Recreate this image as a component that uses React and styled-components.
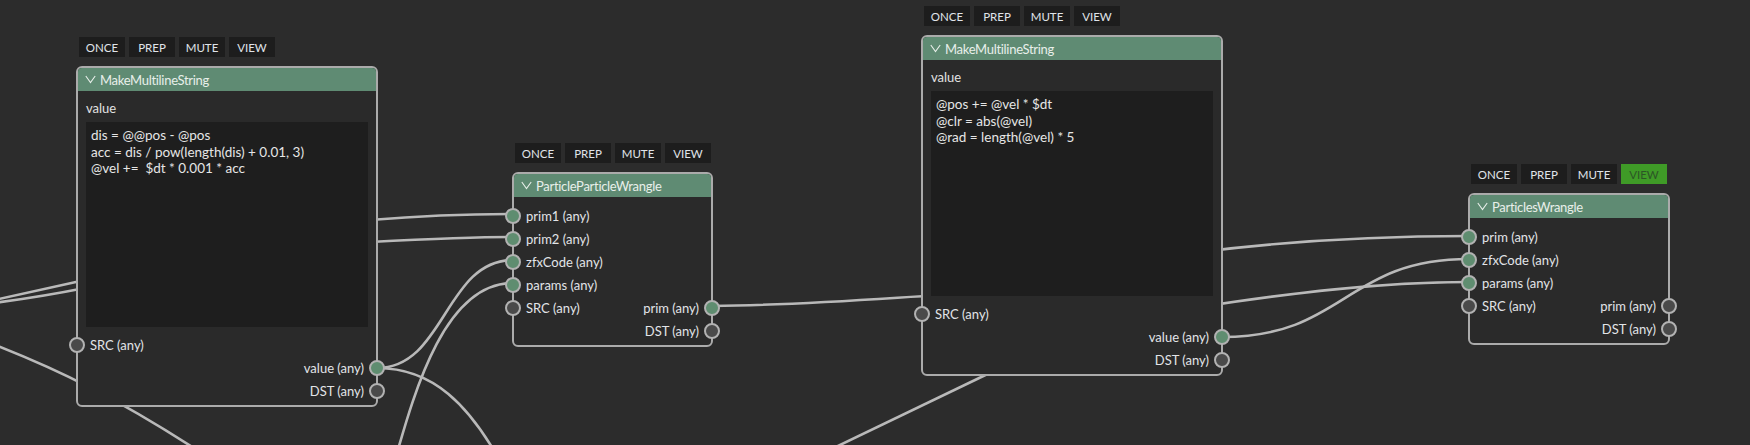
import React from 'react';
import styled, { createGlobalStyle } from 'styled-components';

const GlobalStyle = createGlobalStyle`
  html, body { margin: 0; padding: 0; background: #2c2c2c; }
  body { font-family: Lato, "Noto Sans", "Liberation Sans", sans-serif; }
`;

const Canvas = styled.div`
  position: relative;
  width: 1750px;
  height: 445px;
  overflow: hidden;
  background: #2c2c2c;
`;

const Wires = styled.svg`
  position: absolute;
  left: 0;
  top: 0;
  width: 1750px;
  height: 445px;
  pointer-events: none;
`;

const NodeFrame = styled.div`
  position: absolute;
  left: ${(p) => p.$x}px;
  top: ${(p) => p.$y}px;
  display: flex;
  flex-direction: column;
  gap: 9px;
`;

const Toolbar = styled.div`
  display: flex;
  gap: 4px;
  padding-left: 3px;
`;

const ToolButton = styled.div`
  width: 46px;
  height: 20px;
  display: flex;
  align-items: center;
  justify-content: center;
  background: ${(p) => (p.$active ? '#3f9b27' : '#1d1d1d')};
  color: ${(p) => (p.$active ? '#2c5626' : '#e0e4ea')};
  font-size: 11.5px;
`;

const NodeBox = styled.div`
  width: ${(p) => p.$w}px;
  box-sizing: border-box;
  border: 2px solid #ababab;
  border-radius: 6px;
  background: #2a2a2a;
  display: flex;
  flex-direction: column;
`;

const Header = styled.div`
  height: 23px;
  background: #5f8b73;
  border-radius: 4px 4px 0 0;
  display: flex;
  align-items: center;
  gap: 4px;
  padding-left: 7px;
  color: #e8efea;
  font-size: 13px;
  letter-spacing: -0.3px;
`;

const Body = styled.div`
  padding: 9px 8px 0 8px;
  display: flex;
  flex-direction: column;
`;

const ParamLabel = styled.div`
  height: 16px;
  line-height: 16px;
  font-size: 13px;
  color: #e2e2e2;
  margin-bottom: 6px;
`;

const CodeArea = styled.div`
  height: 205px;
  box-sizing: border-box;
  background: #1e1e1e;
  padding: 5px 5px;
  font-size: 13.5px;
  line-height: 16.5px;
  color: #e6e6e6;
  white-space: pre;
`;

const SocketList = styled.div`
  padding: ${(p) => p.$top}px 0 3px 0;
  display: flex;
  flex-direction: column;
`;

const SocketRow = styled.div`
  position: relative;
  height: 23px;
  display: flex;
  align-items: center;
  justify-content: space-between;
  padding: 0 12px;
  font-size: 13px;
  color: #e2e4e8;
`;

const SocketLabel = styled.span`
  margin-left: ${(p) => (p.$right ? 'auto' : '0')};
`;

const SocketDot = styled.span`
  position: absolute;
  top: 50%;
  margin-top: -8px;
  ${(p) => (p.$right ? 'right: -9px;' : 'left: -9px;')}
  width: 16px;
  height: 16px;
  box-sizing: border-box;
  border: 2px solid #b2b2b2;
  border-radius: 50%;
  background: ${(p) => (p.$on ? '#5f8d70' : '#4a4a4a')};
`;

const Chevron = () => (
  <svg width="11" height="9" viewBox="0 0 11 9">
    <polyline points="0.8,1 5.5,7.6 10.2,1" fill="none" stroke="#e8efea" strokeWidth="1.1" />
  </svg>
);

const Row = ({ left, right }) => (
  <SocketRow>
    {left && <SocketDot $on={left.on} />}
    {left && <SocketLabel>{left.text}</SocketLabel>}
    {right && <SocketLabel $right>{right.text}</SocketLabel>}
    {right && <SocketDot $right $on={right.on} />}
  </SocketRow>
);

const Node = ({ x, y, w, title, view, param, code, rows, rowsTop }) => (
  <NodeFrame $x={x} $y={y}>
    <Toolbar>
      <ToolButton>ONCE</ToolButton>
      <ToolButton>PREP</ToolButton>
      <ToolButton>MUTE</ToolButton>
      <ToolButton $active={view}>VIEW</ToolButton>
    </Toolbar>
    <NodeBox $w={w}>
      <Header>
        <Chevron />
        <span>{title}</span>
      </Header>
      {param && (
        <Body>
          <ParamLabel>{param}</ParamLabel>
          <CodeArea>{code}</CodeArea>
        </Body>
      )}
      <SocketList $top={rowsTop}>
        {rows.map((r, i) => (
          <Row key={i} left={r[0]} right={r[1]} />
        ))}
      </SocketList>
    </NodeBox>
  </NodeFrame>
);

const stringRows = [
  [{ text: 'SRC (any)', on: false }, null],
  [null, { text: 'value (any)', on: true }],
  [null, { text: 'DST (any)', on: false }],
];

const nodes = [
  {
    x: 76,
    y: 37,
    w: 302,
    title: 'MakeMultilineString',
    param: 'value',
    code: 'dis = @@pos - @pos\nacc = dis / pow(length(dis) + 0.01, 3)\n@vel +=  $dt * 0.001 * acc',
    rows: stringRows,
    rowsTop: 6,
  },
  {
    x: 512,
    y: 143,
    w: 201,
    title: 'ParticleParticleWrangle',
    rows: [
      [{ text: 'prim1 (any)', on: true }, null],
      [{ text: 'prim2 (any)', on: true }, null],
      [{ text: 'zfxCode (any)', on: true }, null],
      [{ text: 'params (any)', on: true }, null],
      [{ text: 'SRC (any)', on: false }, { text: 'prim (any)', on: true }],
      [null, { text: 'DST (any)', on: false }],
    ],
    rowsTop: 7,
  },
  {
    x: 921,
    y: 6,
    w: 302,
    title: 'MakeMultilineString',
    param: 'value',
    code: '@pos += @vel * $dt\n@clr = abs(@vel)\n@rad = length(@vel) * 5',
    rows: stringRows,
    rowsTop: 6,
  },
  {
    x: 1468,
    y: 164,
    w: 202,
    title: 'ParticlesWrangle',
    view: true,
    rows: [
      [{ text: 'prim (any)', on: true }, null],
      [{ text: 'zfxCode (any)', on: true }, null],
      [{ text: 'params (any)', on: true }, null],
      [{ text: 'SRC (any)', on: false }, { text: 'prim (any)', on: false }],
      [null, { text: 'DST (any)', on: false }],
    ],
    rowsTop: 7,
  },
];

const wirePaths = [
  'M -10 301 Q 40 290 85 280 L 370 220 C 430 215 470 214 513 214',
  'M -10 303.5 Q 40 297 85 288 L 370 242 C 430 239 470 237 513 237',
  'M -10 343 C 60 370 120 400 200 452',
  'M 377 368 C 445 368 445 260 513 260',
  'M 395 460 C 415 390 445 283 513 283',
  'M 377 368 C 430 368 470 400 510 480',
  'M 712 306 C 800 305 860 300 940 295',
  'M 815 457 L 1000 368',
  'M 1200 252 C 1280 242 1380 236 1469 236',
  'M 1200 307 C 1290 293 1380 282 1469 282',
  'M 1222 337 C 1345 337 1345 259 1469 259',
];

export default function App() {
  return (
    <>
      <GlobalStyle />
      <Canvas>
        <Wires viewBox="0 0 1750 445">
          {wirePaths.map((d, i) => (
            <path key={i} d={d} fill="none" stroke="#b9b9b9" strokeWidth="2.6" />
          ))}
        </Wires>
        {nodes.map((n, i) => (
          <Node key={i} {...n} />
        ))}
      </Canvas>
    </>
  );
}
